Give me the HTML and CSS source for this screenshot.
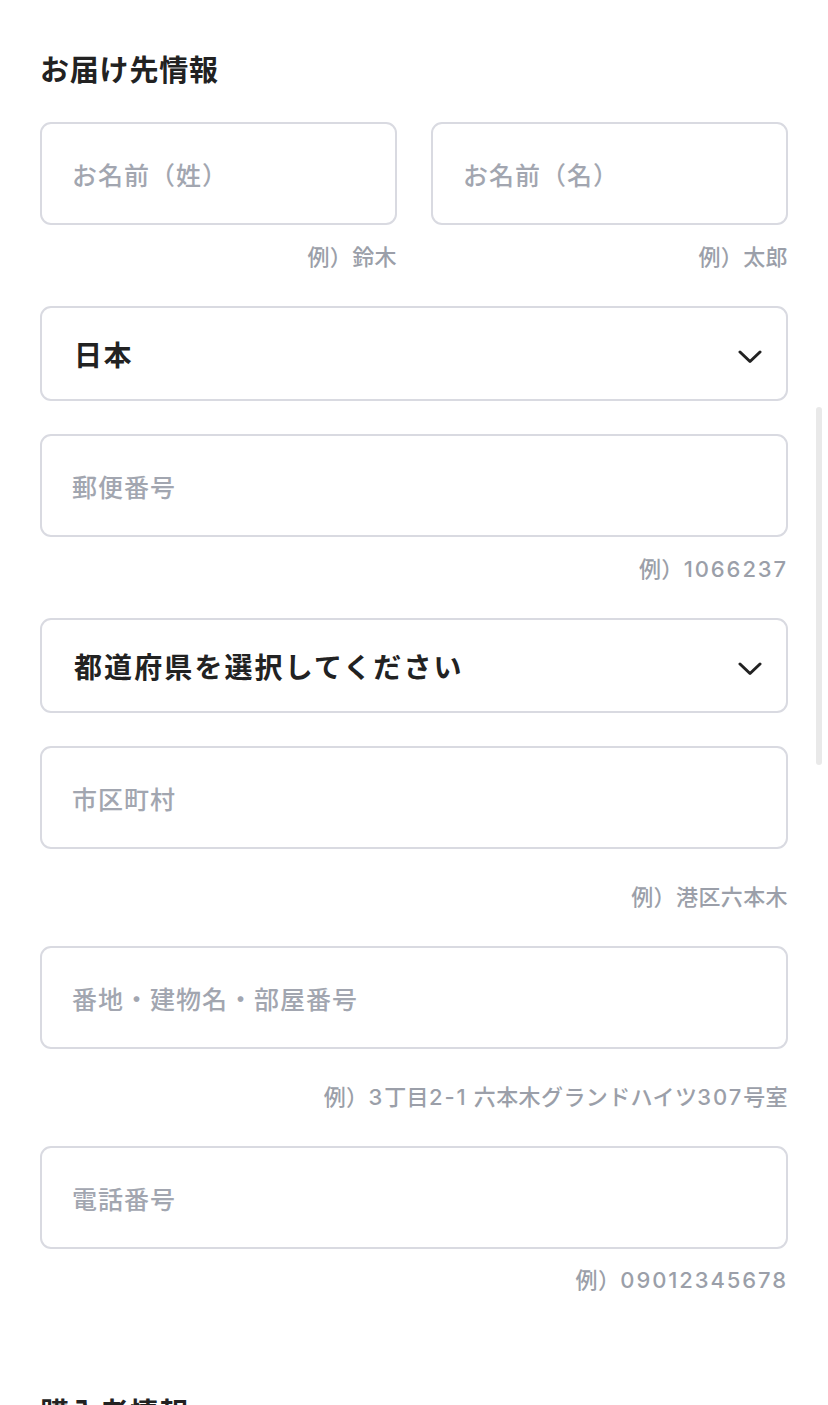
FILE: index.html
```html
<!DOCTYPE html>
<html lang="ja">
<head>
<meta charset="utf-8">
<title>お届け先情報</title>
<link rel="stylesheet" href="styles.css">
</head>
<body>
<main class="form">
  <h2 class="section-title">お届け先情報</h2>

  <div class="name-row">
    <div class="field-col">
      <input class="text-field" type="text" placeholder="お名前（姓）">
      <p class="hint">例）鈴木</p>
    </div>
    <div class="field-col">
      <input class="text-field" type="text" placeholder="お名前（名）">
      <p class="hint">例）太郎</p>
    </div>
  </div>

  <div class="select-field country">
    <span class="select-value">日本</span>
    <svg class="chevron" width="24" height="14" viewBox="0 0 24 14"><path d="M2 2 L12 11.5 L22 2" fill="none" stroke="#222" stroke-width="3" stroke-linecap="round" stroke-linejoin="round"/></svg>
  </div>

  <input class="text-field postal" type="text" placeholder="郵便番号">
  <p class="hint">例）<span class="num">1066237</span></p>

  <div class="select-field pref">
    <span class="select-value wide">都道府県を選択してください</span>
    <svg class="chevron" width="24" height="14" viewBox="0 0 24 14"><path d="M2 2 L12 11.5 L22 2" fill="none" stroke="#222" stroke-width="3" stroke-linecap="round" stroke-linejoin="round"/></svg>
  </div>

  <input class="text-field city" type="text" placeholder="市区町村">
  <p class="hint hint-wide">例）港区六本木</p>

  <input class="text-field address" type="text" placeholder="番地・建物名・部屋番号">
  <p class="hint hint-wide">例）<span class="num">3</span>丁目<span class="num">2-1</span> 六本木グランドハイツ<span class="num">307</span>号室</p>

  <input class="text-field tel" type="text" placeholder="電話番号">
  <p class="hint">例）<span class="num">09012345678</span></p>

  <h2 class="section-title next">購入者情報</h2>
</main>
<div class="scroll-indicator"></div>
</body>
</html>
```

FILE: styles.css
```css
html, body {
  margin: 0;
  padding: 0;
  background: #ffffff;
}

body {
  font-family: "Noto Sans CJK JP", "Noto Sans", sans-serif;
  color: #222222;
  overflow: hidden;
  height: 1405px;
}

.form {
  box-sizing: border-box;
  width: 828px;
  padding: 48px 40px 0 40px;
  display: flex;
  flex-direction: column;
}

.section-title {
  margin: 0 0 34px 0;
  font-size: 29px;
  line-height: 40px;
  font-weight: 700;
  color: #222222;
  letter-spacing: 0.8px;
}

.section-title.next {
  margin-top: 96px;
}

.name-row {
  display: flex;
  gap: 34px;
}

.field-col {
  flex: 1;
  display: flex;
  flex-direction: column;
}

.text-field {
  box-sizing: border-box;
  display: block;
  width: 100%;
  height: 103px;
  margin: 0;
  padding: 0 30px;
  border: 2px solid #d9dae1;
  border-radius: 11px;
  background: #ffffff;
  font-family: "Noto Sans CJK JP", "Noto Sans", sans-serif;
  font-size: 25px;
  font-weight: 500;
  letter-spacing: 1px;
  color: #222222;
  outline: none;
}

.text-field::placeholder {
  color: #a2a6b0;
  opacity: 1;
}

.hint {
  margin: 17px 0 0 0;
  font-family: "Inter", "Noto Sans CJK JP", sans-serif;
  font-size: 22px;
  line-height: 30px;
  font-weight: 500;
  color: #9b9fa9;
  text-align: right;
  letter-spacing: 0.4px;
}

.hint .num {
  letter-spacing: 1.9px;
}

.hint-wide {
  margin-top: 33px;
}

.select-field {
  box-sizing: border-box;
  height: 95px;
  margin-top: 34px;
  padding: 0 24px 0 32px;
  border: 2px solid #d9dae1;
  border-radius: 11px;
  display: flex;
  align-items: center;
  justify-content: space-between;
}

.select-value {
  font-size: 28px;
  font-weight: 700;
  letter-spacing: 1.5px;
  color: #222222;
}

.select-value.wide {
  letter-spacing: 2.1px;
}

.chevron {
  margin-top: 6px;
  flex: none;
}

.postal,
.city {
  margin-top: 33px;
}

.address,
.tel {
  margin-top: 34px;
}

.tel + .hint {
  margin-top: 16px;
}

.scroll-indicator {
  position: fixed;
  left: 816px;
  top: 407px;
  width: 6px;
  height: 358px;
  border-radius: 3px;
  background: #e9e9e9;
}
```
